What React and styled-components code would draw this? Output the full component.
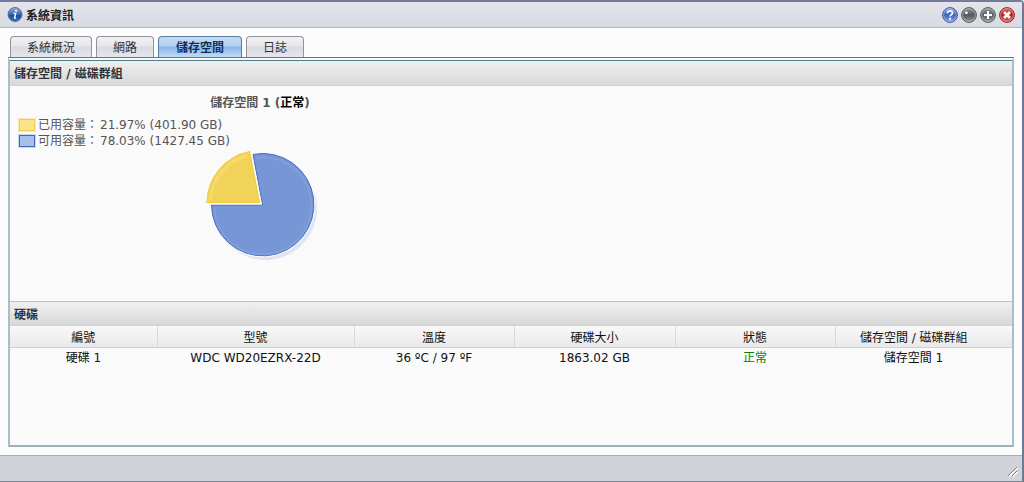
import React, { useState } from "react";
import styled, { createGlobalStyle } from "styled-components";

const tabs = ["系統概況", "網路", "儲存空間", "日誌"];

const legends = [
  {
    label: "已用容量",
    value: "21.97% (401.90 GB)",
    fill: "#fbe38a",
    line: "#efcd55",
    halo: "#f5eab8",
  },
  {
    label: "可用容量",
    value: "78.03% (1427.45 GB)",
    fill: "#a6c0ea",
    line: "#4467ae",
    halo: "#c4d6f2",
  },
];

const columns = [
  { label: "編號", width: "147px" },
  { label: "型號", width: "197px" },
  { label: "溫度", width: "160px" },
  { label: "硬碟大小", width: "161px" },
  { label: "狀態", width: "160px" },
  { label: "儲存空間 / 磁碟群組", width: "auto" },
];

const disks = [
  {
    name: "硬碟 1",
    model: "WDC WD20EZRX-22D",
    temperature: "36 ºC / 97 ºF",
    size: "1863.02 GB",
    status: "正常",
    volume: "儲存空間 1",
  },
];

const InfoIcon = () => (
  <svg width="16" height="16" viewBox="0 0 16 16" aria-hidden="true">
    <defs>
      <linearGradient id="infoBall" x1="0" y1="0" x2="0" y2="1">
        <stop offset="0" stopColor="#9ab4e2" />
        <stop offset="0.5" stopColor="#3a63ad" />
        <stop offset="0.55" stopColor="#1f4c9c" />
        <stop offset="1" stopColor="#2f78cc" />
      </linearGradient>
    </defs>
    <circle cx="8" cy="7.5" r="7" fill="url(#infoBall)" stroke="#5a729c" />
    <circle cx="9" cy="3.8" r="1.1" fill="#fff" />
    <path
      d="M6.6 6.4H8.7L7.6 10.6Q7.5 11.6 9 10.8"
      fill="none"
      stroke="#fff"
      strokeWidth="1.4"
    />
  </svg>
);

const ballColors = {
  help: ["#8ba9e8", "#3c62bb", "#36559c"],
  minimize: ["#97999b", "#55585b", "#55585a"],
  maximize: ["#97999b", "#5a5e61", "#55585a"],
  close: ["#e26a64", "#b51f22", "#982225"],
};

const BallIcon = ({ type }) => {
  const [light, dark, ring] = ballColors[type];
  return (
    <svg width="16" height="16" viewBox="0 0 16 16" aria-hidden="true">
      <defs>
        <linearGradient id={`ball-${type}`} x1="0" y1="0" x2="0" y2="1">
          <stop offset="0" stopColor={light} />
          <stop offset="0.5" stopColor={dark} />
          <stop offset="1" stopColor={light} />
        </linearGradient>
      </defs>
      <circle cx="8" cy="8" r="7.4" fill={`url(#ball-${type})`} stroke={ring} />
      <circle
        cx="8"
        cy="8"
        r="6.4"
        fill="none"
        stroke="#fff"
        strokeOpacity="0.45"
        strokeWidth="0.8"
      />
      {type === "help" && (
        <>
          <path
            d="M5.4 6.2C5.4 3 10.8 3.2 10.6 6.1C10.5 7.6 8.1 7.7 8.1 9.6"
            fill="none"
            stroke="#fff"
            strokeWidth="1.7"
          />
          <circle cx="8.1" cy="11.9" r="1.1" fill="#fff" />
        </>
      )}
      {type === "minimize" && <circle cx="5.4" cy="5.8" r="1.4" fill="#fff" />}
      {type === "maximize" && (
        <path d="M8 4V12M4 8H12" stroke="#fff" strokeWidth="2" />
      )}
      {type === "close" && (
        <path d="M5 5L11 11M11 5L5 11" stroke="#fff" strokeWidth="2.6" />
      )}
    </svg>
  );
};

const PieChart = () => (
  <svg width="120" height="120" viewBox="0 0 120 120" role="img" aria-label="儲存空間 1">
    <circle cx="65.5" cy="64.5" r="51.5" fill="#dfe4ef" />
    <path
      d="M62.5 61H11.5A51.2 51.2 0 1 0 53 10.4Z"
      fill="#7796d6"
      stroke="#fafafa"
      strokeWidth="3"
    />
    <path
      d="M62.5 61H11.5A51.2 51.2 0 1 0 53 10.4Z"
      fill="#7796d6"
      stroke="#4a6ebd"
    />
    <path
      d="M14.5 65A48.5 48.5 0 1 0 56 13.8"
      fill="none"
      stroke="#819edc"
      strokeWidth="2"
    />
    <path
      d="M59.5 58.5H7A53 53 0 0 1 49.5 7.5Z"
      fill="#f2d35a"
      stroke="#fafafa"
      strokeWidth="4"
    />
    <path
      d="M59.5 58.5H7A53 53 0 0 1 49.5 7.5Z"
      fill="#f2d35a"
      stroke="#f3cb3c"
      strokeWidth="1.2"
    />
    <path
      d="M10.5 56A49.5 49.5 0 0 1 47 11.5"
      fill="none"
      stroke="#f6db6c"
      strokeWidth="3"
    />
  </svg>
);

const App = () => {
  const [activeTab, setActiveTab] = useState("儲存空間");

  return (
    <>
      <GlobalStyle />
      <SWindow>
        <STitleBar>
          <InfoIcon />
          <STitle>系統資訊</STitle>
          <SWindowButton type="button" aria-label="說明">
            <BallIcon type="help" />
          </SWindowButton>
          <SWindowButton type="button" aria-label="最小化">
            <BallIcon type="minimize" />
          </SWindowButton>
          <SWindowButton type="button" aria-label="最大化">
            <BallIcon type="maximize" />
          </SWindowButton>
          <SWindowButton type="button" aria-label="關閉">
            <BallIcon type="close" />
          </SWindowButton>
        </STitleBar>

        <SBody>
          <STabList role="tablist">
            {tabs.map((tab) => (
              <STab
                key={tab}
                type="button"
                role="tab"
                aria-selected={activeTab === tab}
                $active={activeTab === tab}
                onClick={() => setActiveTab(tab)}
              >
                {tab}
              </STab>
            ))}
          </STabList>

          <SPanel>
            <SSectionTitle>儲存空間 / 磁碟群組</SSectionTitle>
            <SVolume>
              <SVolumeTitle>
                儲存空間 1 (<SVolumeStatus>正常</SVolumeStatus>)
              </SVolumeTitle>
              <SLegendList>
                {legends.map((legend) => (
                  <SLegend key={legend.label}>
                    <SSwatch
                      $fill={legend.fill}
                      $line={legend.line}
                      $halo={legend.halo}
                    />
                    <SLegendLabel>{legend.label}：</SLegendLabel>
                    <span>{legend.value}</span>
                  </SLegend>
                ))}
              </SLegendList>
              <SChart>
                <PieChart />
              </SChart>
            </SVolume>

            <SSectionTitle $divided>硬碟</SSectionTitle>
            <STable>
              <colgroup>
                {columns.map((column) => (
                  <SCol key={column.label} $width={column.width} />
                ))}
              </colgroup>
              <thead>
                <tr>
                  {columns.map((column) => (
                    <SHeadCell key={column.label} scope="col">
                      {column.label}
                    </SHeadCell>
                  ))}
                </tr>
              </thead>
              <tbody>
                {disks.map((disk) => (
                  <tr key={disk.name}>
                    <SCell>{disk.name}</SCell>
                    <SCell>{disk.model}</SCell>
                    <SCell>{disk.temperature}</SCell>
                    <SCell>{disk.size}</SCell>
                    <SCell $healthy>{disk.status}</SCell>
                    <SCell>{disk.volume}</SCell>
                  </tr>
                ))}
              </tbody>
            </STable>
          </SPanel>
        </SBody>

        <SFooter>
          <svg width="10" height="10" viewBox="0 0 10 10" aria-hidden="true">
            <path d="M1 9.5L9.5 1M5 9.5L9.5 5" stroke="#fff" strokeWidth="1.4" />
            <path d="M0 9L9 0M4 9L9 4" stroke="#777b80" />
          </svg>
        </SFooter>
      </SWindow>
    </>
  );
};

export default App;

const GlobalStyle = createGlobalStyle`
  * {
    box-sizing: border-box;
  }
  body {
    margin: 0;
    font-family: "DejaVu Sans", "Noto Sans CJK TC", sans-serif;
    font-size: 12px;
    line-height: 16px;
    color: #222;
  }
  svg {
    display: block;
    flex: none;
  }
`;

const SWindow = styled.div`
  display: flex;
  flex-direction: column;
  min-height: 100vh;
  border-top: 2px solid #737d9b;
  border-right: 2px solid #6c7a9a;
  border-bottom: 1px solid #7f858e;
  border-top-right-radius: 4px;
  background-color: #fcfcfc;
`;

const STitleBar = styled.header`
  display: flex;
  align-items: center;
  gap: 3px;
  height: 26px;
  padding: 0 7px;
  border-bottom: 1px solid #b5b6b8;
  background: linear-gradient(#e4e5eb, #d8dae2);
`;

const STitle = styled.h1`
  flex: 1;
  margin: 0;
  padding-top: 2px;
  font-size: 12px;
  line-height: 16px;
  color: #222;
`;

const SWindowButton = styled.button`
  width: 16px;
  height: 16px;
  padding: 0;
  border: none;
  background: none;
  cursor: pointer;
`;

const SBody = styled.main`
  display: flex;
  flex: 1;
  flex-direction: column;
  padding: 8px;
`;

const STabList = styled.div`
  display: flex;
  gap: 4px;
  padding: 0 2px;
`;

const STab = styled.button`
  height: 21px;
  padding: 2px ${({ $active }) => ($active ? "17px" : "16px")} 0;
  border: 1px solid ${({ $active }) => ($active ? "#5c7da3" : "#929499")};
  border-bottom: none;
  border-radius: 4px 4px 0 0;
  background: ${({ $active }) =>
    $active
      ? "linear-gradient(#c3daf2 0%, #b4d1f2 45%, #88b4e6 50%, #c3dcf8 100%)"
      : "linear-gradient(#f1f1f4 0%, #e7e7ec 45%, #d9dae2 50%, #e6e7ed 100%)"};
  color: ${({ $active }) => ($active ? "#0f2f5a" : "#333")};
  font-family: inherit;
  font-size: 12px;
  font-weight: ${({ $active }) => ($active ? "bold" : "normal")};
  line-height: 16px;
  cursor: pointer;
`;

const SPanel = styled.section`
  flex: 1;
  border: 2px solid #a9bfc8;
  border-top: 4px double #4f8088;
  border-bottom-color: #9fb0b7;
  background-color: #fafafa;
`;

const SSectionTitle = styled.h2`
  height: 25px;
  margin: 0;
  padding: 5px 4px 3px;
  border-top: ${({ $divided }) => ($divided ? "1px solid #c0c0c0" : "none")};
  border-bottom: 1px solid #d0d0d0;
  background: linear-gradient(#f0f0f0, #d8d8d8);
  font-size: 12px;
  line-height: 16px;
  color: #333;
`;

const SVolume = styled.article`
  max-width: 500px;
  height: 215px;
  padding: 9px 8px 0;
  color: #555;
`;

const SVolumeTitle = styled.h3`
  margin: 0 0 6px;
  font-size: 12px;
  line-height: 16px;
  text-align: center;
`;

const SVolumeStatus = styled.span`
  color: #000;
`;

const SLegendList = styled.ul`
  margin: 0;
  padding: 0;
  list-style: none;
`;

const SLegend = styled.li`
  display: flex;
  align-items: center;
  height: 16px;
`;

const SSwatch = styled.span`
  width: 16px;
  height: 12px;
  margin: 0 3px 0 1px;
  border: 1px solid ${({ $line }) => $line};
  outline: 1px solid ${({ $halo }) => $halo};
  background-color: ${({ $fill }) => $fill};
`;

const SLegendLabel = styled.span`
  width: 62px;
`;

const SChart = styled.div`
  display: flex;
  justify-content: center;
  margin-top: -5px;
`;

const STable = styled.table`
  width: 100%;
  table-layout: fixed;
  border-collapse: collapse;
  color: #111;
`;

const SCol = styled.col`
  width: ${({ $width }) => $width};
`;

const SHeadCell = styled.th`
  height: 21px;
  padding: 4px 4px 1px;
  border-right: 1px solid #dadada;
  border-bottom: 1px solid #cfcfcf;
  background: linear-gradient(#f8f8f8, #e9e9e9);
  font-weight: normal;
  white-space: nowrap;

  &:last-child {
    padding-right: 24px;
    border-right: none;
  }
`;

const SCell = styled.td`
  height: 20px;
  padding: 2px 4px;
  color: ${({ $healthy }) => ($healthy ? "#0a7f0a" : "inherit")};
  text-align: center;
  white-space: nowrap;

  &:last-child {
    padding-right: 24px;
  }
`;

const SFooter = styled.footer`
  display: flex;
  align-items: flex-end;
  justify-content: flex-end;
  height: 26px;
  padding: 4px;
  border-top: 1px solid #a9abae;
  background-color: #d0d3d8;
`;
